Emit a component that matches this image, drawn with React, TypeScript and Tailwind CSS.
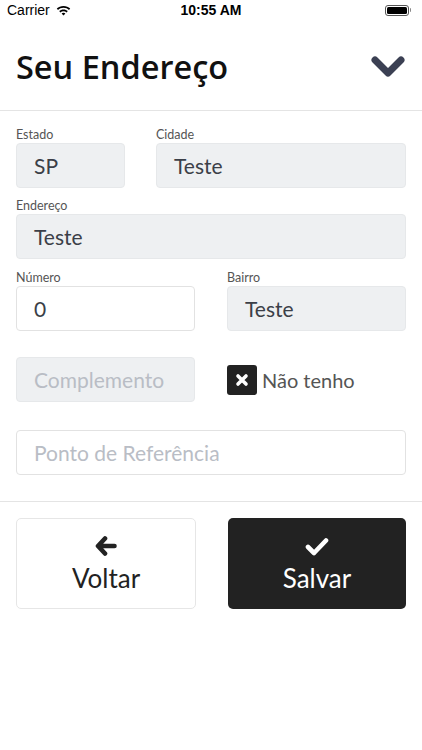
import React from "react";

const font = { fontFamily: "Lato, 'Noto Sans', sans-serif" };

function Label({ children }: { children: React.ReactNode }) {
  return <div className="h-[15px] text-[12.5px] leading-[14px] text-[#555]">{children}</div>;
}

function Field({ value, placeholder, white }: { value?: string; placeholder?: string; white?: boolean }) {
  return (
    <div
      className={
        "h-[45px] rounded-[4px] flex items-center pl-[17px] text-[21px] " +
        (white ? "bg-white border border-[#e2e2e2]" : "bg-[#eef0f2] border border-[#e6e8ea]")
      }
    >
      {value ? (
        <span className="text-[#3b3f48]">{value}</span>
      ) : (
        <span className="text-[#b9bdc5]">{placeholder}</span>
      )}
    </div>
  );
}

export default function App() {
  return (
    <div className="w-[422px] h-[750px] bg-white overflow-hidden" style={font}>
      {/* status bar */}
      <div className="h-[20px] relative flex items-center px-[7px] text-[14px] text-black" style={{ fontFamily: "'Liberation Sans', Arial, sans-serif" }}>
        <span className="text-[14px]">Carrier</span>
        <svg className="ml-[6px]" width="15" height="11" viewBox="0 0 15 11">
          <path d="M7.5 1C4.8 1 2.5 2 0.8 3.6L2 4.9C3.4 3.6 5.4 2.8 7.5 2.8S11.6 3.6 13 4.9L14.2 3.6C12.5 2 10.2 1 7.5 1Z" fill="#000" />
          <path d="M7.5 4.4C5.8 4.4 4.3 5 3.2 6.1L4.4 7.4C5.2 6.6 6.3 6.2 7.5 6.2S9.8 6.6 10.6 7.4L11.8 6.1C10.7 5 9.2 4.4 7.5 4.4Z" fill="#000" />
          <path d="M7.5 7.7C6.7 7.7 6.1 8 5.6 8.5L7.5 10.5L9.4 8.5C8.9 8 8.3 7.7 7.5 7.7Z" fill="#000" />
        </svg>
        <span className="absolute left-0 right-0 text-center text-[14px] font-semibold pointer-events-none">10:55 AM</span>
        <div className="ml-auto mr-[4px] flex items-center">
          <div className="w-[24px] h-[11px] border border-[#555] rounded-[3px] p-[1px]">
            <div className="w-full h-full bg-black rounded-[1.5px]" />
          </div>
          <div className="w-[1.5px] h-[4px] bg-[#888] ml-[1px] rounded-r" />
        </div>
      </div>

      {/* header */}
      <div className="h-[91px] flex items-center justify-between pl-4 pr-[17px] border-b border-[#e4e4e4]">
        <h1 className="text-[32.5px] font-semibold text-[#111] leading-none mt-[4px]" style={{ fontFamily: "'Open Sans', sans-serif" }}>Seu Endereço</h1>
        <svg width="34" height="24" viewBox="0 0 34 24" className="mt-[3px]">
          <path d="M4 5 L17 18 L30 5" fill="none" stroke="#3b4053" strokeWidth="7" strokeLinecap="round" strokeLinejoin="round" />
        </svg>
      </div>

      {/* form */}
      <div className="px-4 pt-[17px]">
        <div className="flex gap-[31px]">
          <div className="w-[109px]">
            <Label>Estado</Label>
            <Field value="SP" />
          </div>
          <div className="flex-1">
            <Label>Cidade</Label>
            <Field value="Teste" />
          </div>
        </div>

        <div className="mt-[11px]">
          <Label>Endereço</Label>
          <Field value="Teste" />
        </div>

        <div className="mt-[12px] flex gap-[32px]">
          <div className="flex-1">
            <Label>Número</Label>
            <Field value="0" white />
          </div>
          <div className="flex-1">
            <Label>Bairro</Label>
            <Field value="Teste" />
          </div>
        </div>

        <div className="mt-[26px] flex gap-[32px]">
          <div className="flex-1">
            <Field placeholder="Complemento" />
          </div>
          <div className="flex-1 flex items-center">
            <div className="w-[30px] h-[30px] bg-[#222] rounded-[3px] flex items-center justify-center">
              <svg width="14" height="14" viewBox="0 0 14 14">
                <path d="M3 3 L11 11 M11 3 L3 11" stroke="#fff" strokeWidth="3.6" strokeLinecap="round" />
              </svg>
            </div>
            <span className="ml-[5px] text-[20px] text-[#555]">Não tenho</span>
          </div>
        </div>

        <div className="mt-[28px]">
          <Field placeholder="Ponto de Referência" white />
        </div>
      </div>

      <div className="mt-[26px] border-t border-[#e4e4e4]" />

      <div className="px-4 pt-[16px] flex gap-[32px]">
        <button className="flex-1 h-[91px] rounded-[5px] bg-white border border-[#e6e6e6] flex flex-col items-center justify-center text-[#222]">
          <svg width="22" height="20" viewBox="0 0 22 20" className="mt-[2px]">
            <path d="M10 2.5 L3 10 L10 17.5 M3.5 10 L19.5 10" fill="none" stroke="#222" strokeWidth="4.6" strokeLinecap="round" strokeLinejoin="round" />
          </svg>
          <span className="text-[26px] leading-[30px] mt-[7px]">Voltar</span>
        </button>
        <button className="flex-1 h-[91px] rounded-[5px] bg-[#222] flex flex-col items-center justify-center text-white">
          <svg width="24" height="19" viewBox="0 0 24 19" className="mt-[2px]">
            <path d="M3 10 L9 16 L21 3.5" fill="none" stroke="#fff" strokeWidth="4.6" strokeLinecap="round" strokeLinejoin="round" />
          </svg>
          <span className="text-[26px] leading-[30px] mt-[7px]">Salvar</span>
        </button>
      </div>
    </div>
  );
}
